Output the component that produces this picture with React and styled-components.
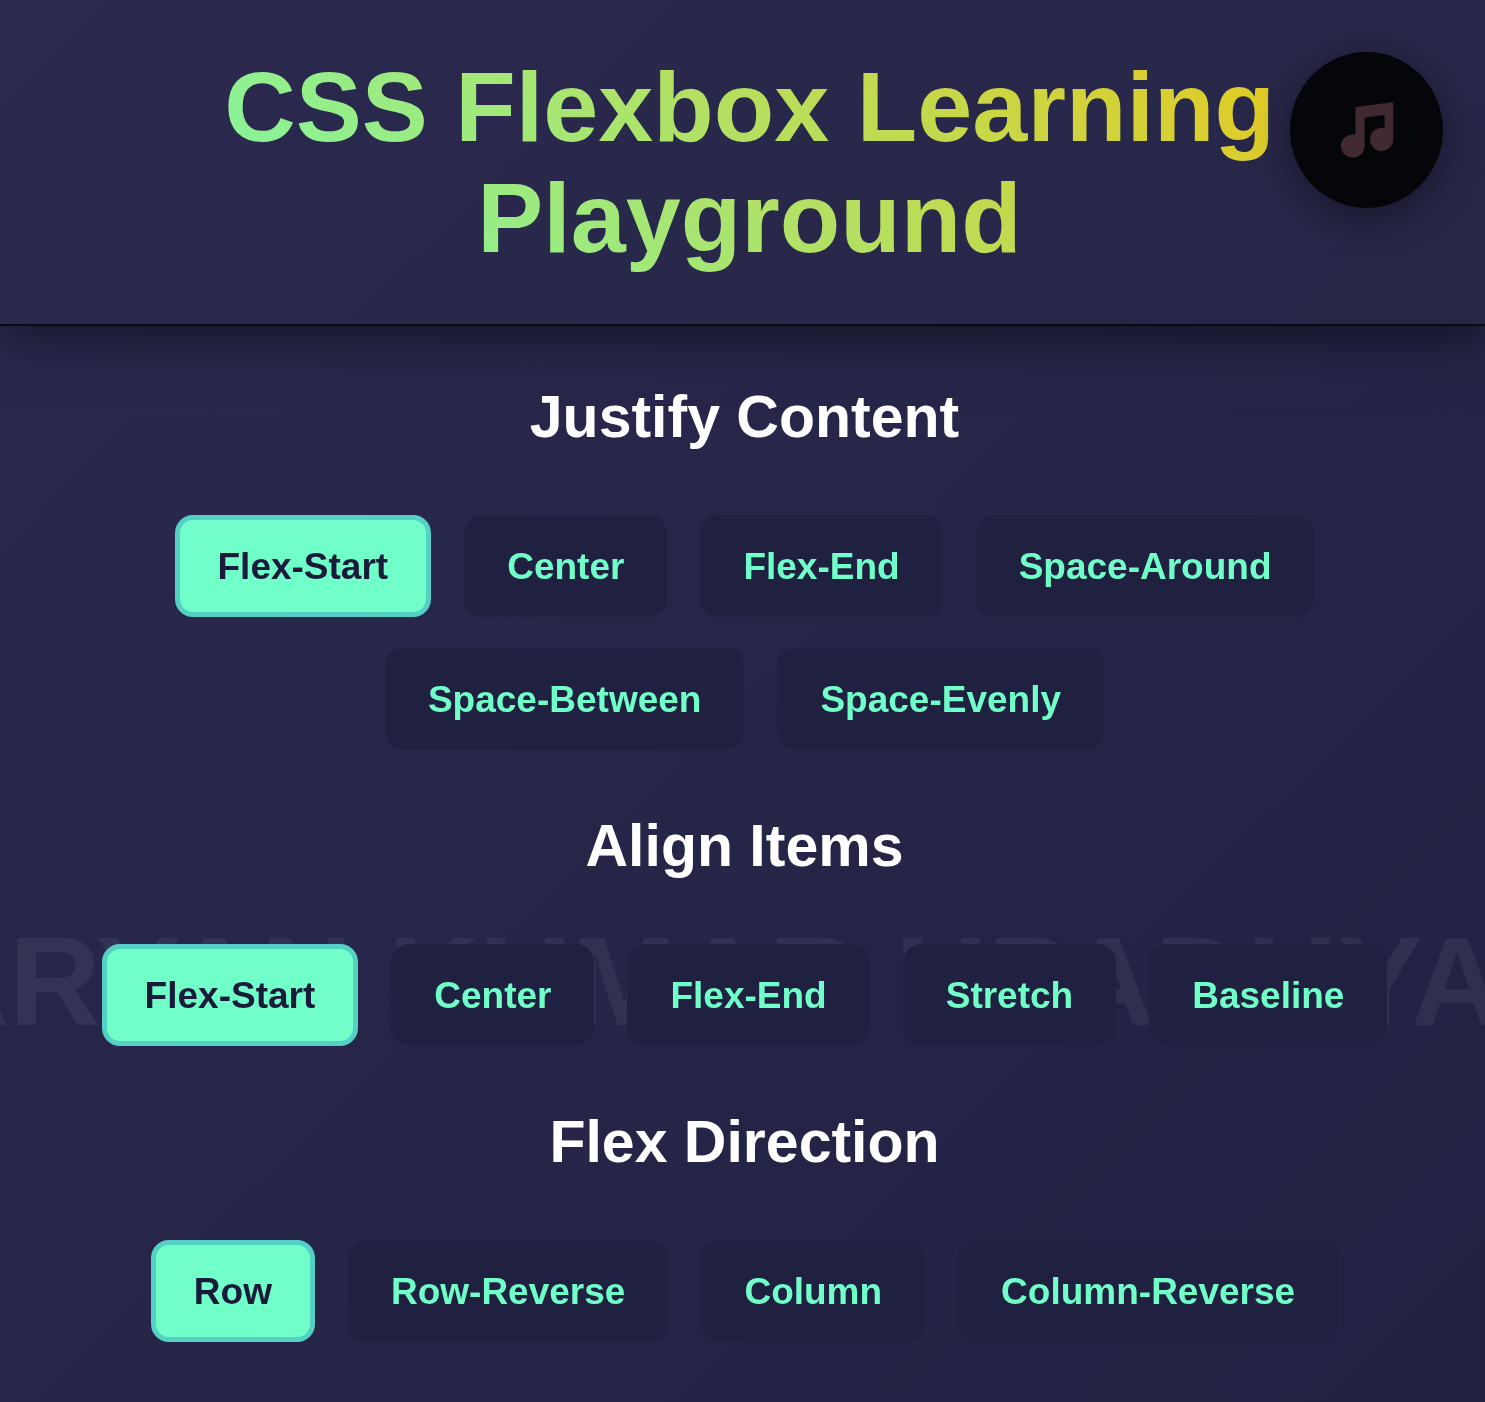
import React, { useState } from "react";
import styled, { createGlobalStyle } from "styled-components";

const GlobalStyle = createGlobalStyle`
  * {
    box-sizing: border-box;
    margin: 0;
    padding: 0;
  }

  body {
    min-height: 100vh;
    font-family: "Liberation Sans", Arial, sans-serif;
    color: white;
    background: linear-gradient(135deg, #2b2a4f, #212142) fixed;
  }
`;

const Header = styled.header`
  position: relative;
  padding: 51px 100px 51px 114px;
  border-bottom: 2px solid #0a0a14;
  background: linear-gradient(135deg, #2b2a4f, #262647);
  box-shadow: 0 10px 50px rgba(0, 0, 0, 0.5);
`;

const Title = styled.h1`
  font-size: 99px;
  line-height: 111px;
  text-align: center;
  color: transparent;
  background: linear-gradient(45deg, #76fcb2, #eec515);
  background-clip: text;
`;

const MusicButton = styled.button`
  position: fixed;
  top: 52px;
  right: 42px;
  z-index: 2;
  display: flex;
  align-items: center;
  justify-content: center;
  width: 153px;
  height: 156px;
  border: none;
  border-radius: 50%;
  color: #402930;
  background-color: #05060a;
  box-shadow: 0 10px 40px rgba(0, 0, 0, 0.4);
  cursor: pointer;
`;

const Watermark = styled.div`
  position: fixed;
  top: 70%;
  left: 0;
  right: 0;
  z-index: -1;
  display: flex;
  justify-content: center;
  padding: 0 72px 0 80px;
  transform: translateY(-50%);
  font-size: 127px;
  font-weight: bold;
  white-space: nowrap;
  color: rgba(255, 255, 255, 0.06);
  pointer-events: none;
`;

const Main = styled.main`
  display: flex;
  flex-direction: column;
  gap: 62px;
  padding: 57px 72px 60px 76px;
`;

const Group = styled.section`
  display: flex;
  flex-direction: column;
  gap: 64px;
`;

const GroupTitle = styled.h2`
  font-size: 59px;
  line-height: 68px;
  text-align: center;
`;

const Options = styled.div`
  display: flex;
  flex-wrap: wrap;
  justify-content: center;
  gap: 31px 33px;
`;

const Option = styled.button`
  height: 102px;
  padding: 2px 38px 0;
  border: 5px solid ${(props) => (props.$active ? "#54d0c4" : "#202040")};
  border-radius: 18px;
  font-family: inherit;
  font-size: 37px;
  font-weight: bold;
  color: ${(props) => (props.$active ? "#1a1a3a" : "#70ffc8")};
  background-color: ${(props) => (props.$active ? "#70ffc8" : "#202040")};
  cursor: pointer;
`;

const groups = [
  {
    title: "Justify Content",
    options: [
      "Flex-Start",
      "Center",
      "Flex-End",
      "Space-Around",
      "Space-Between",
      "Space-Evenly",
    ],
  },
  {
    title: "Align Items",
    options: ["Flex-Start", "Center", "Flex-End", "Stretch", "Baseline"],
  },
  {
    title: "Flex Direction",
    options: ["Row", "Row-Reverse", "Column", "Column-Reverse"],
  },
];

const MusicIcon = () => (
  <svg width="54" height="56" viewBox="299 249 160 169" fill="currentColor">
    <path d="M344 269 Q344 265 348 264 L454 250 Q458 250 458 254 V362 A35 35 0 1 1 432 328 V288 L372 296 V382 A36 35 0 1 1 344 348 Z" />
  </svg>
);

const OptionGroup = ({ title, options }) => {
  const [selected, setSelected] = useState(options[0]);

  return (
    <Group>
      <GroupTitle>{title}</GroupTitle>
      <Options>
        {options.map((option) => (
          <Option
            key={option}
            $active={option === selected}
            onClick={() => setSelected(option)}
          >
            {option}
          </Option>
        ))}
      </Options>
    </Group>
  );
};

const App = () => {
  return (
    <>
      <GlobalStyle />
      <Watermark>ARYAN KUMAR UPADHYAY</Watermark>
      <Header>
        <Title>CSS Flexbox Learning Playground</Title>
      </Header>
      <MusicButton aria-label="Toggle music">
        <MusicIcon />
      </MusicButton>
      <Main>
        {groups.map((group) => (
          <OptionGroup key={group.title} {...group} />
        ))}
      </Main>
    </>
  );
};

export default App;
